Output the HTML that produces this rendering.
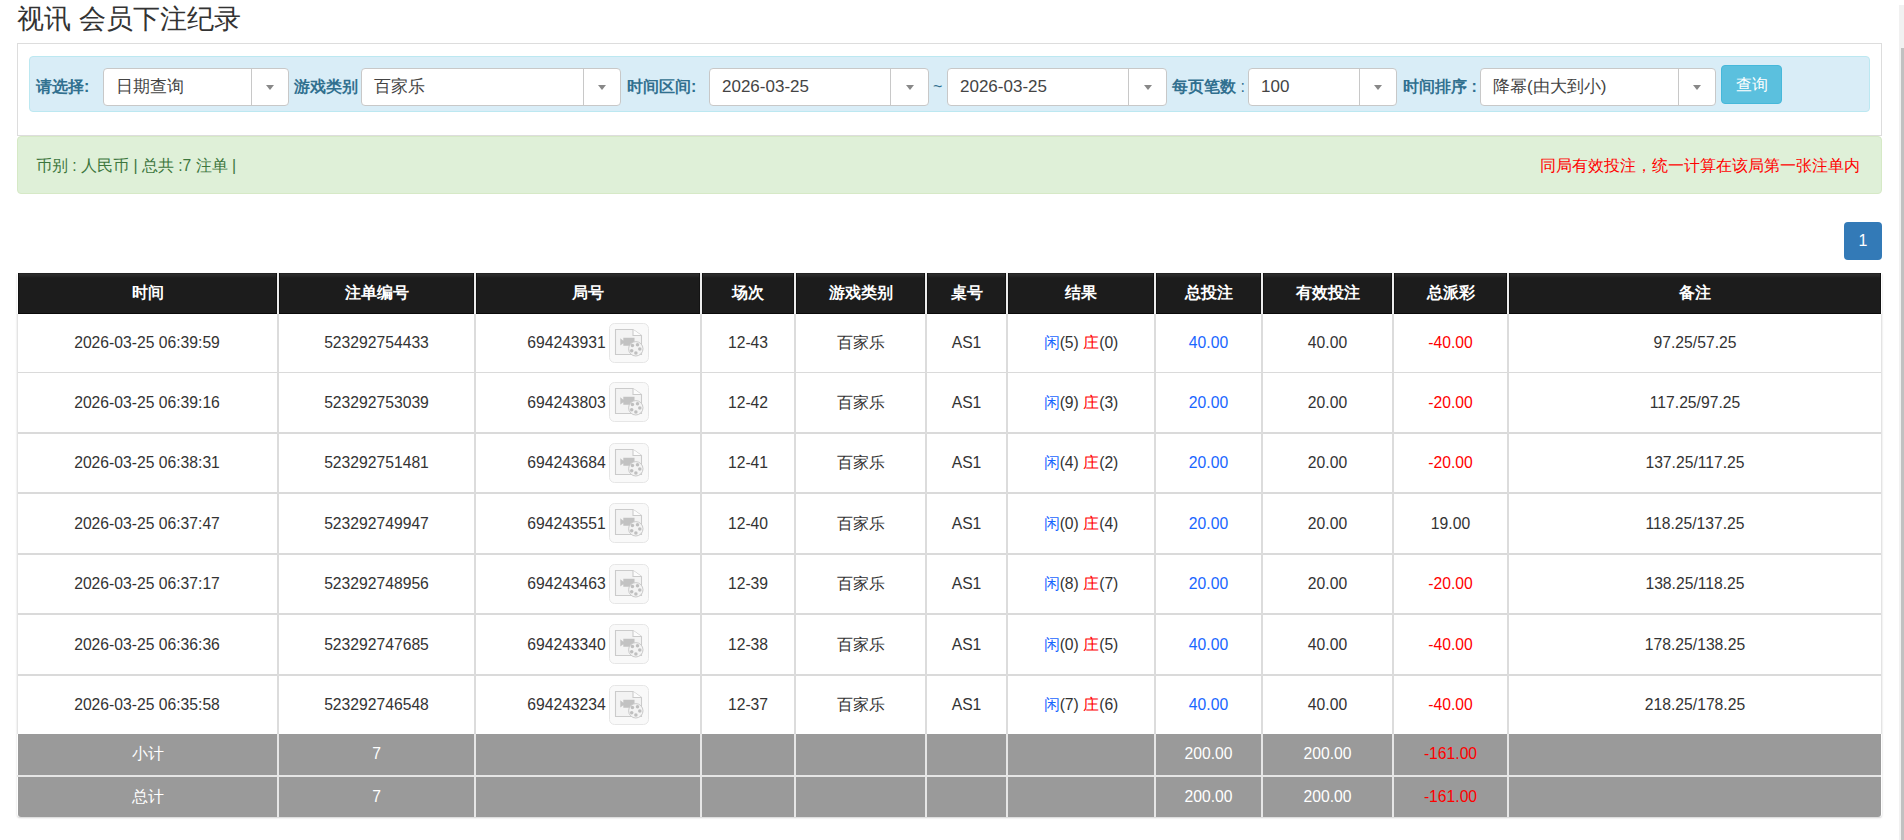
<!DOCTYPE html>
<html><head><meta charset="utf-8"><title>视讯 会员下注纪录</title>
<style>
html,body{margin:0;padding:0;background:#fff;}
body{width:1904px;height:840px;overflow:hidden;position:relative;font-family:"Liberation Sans",sans-serif;color:#333;}
.a{position:absolute;white-space:nowrap;}
.title{left:17px;top:1px;font-size:27px;line-height:36px;color:#333;}
.panel{left:17px;top:43px;width:1863px;height:91px;border:1px solid #ddd;background:#fff;}
.bar{left:29px;top:56px;width:1839px;height:54px;border:1px solid #bce8f1;background:#d9edf7;border-radius:4px;}
.lbl{font-size:16px;font-weight:bold;color:#31708f;line-height:20px;top:77px;}
.sel{top:68px;height:36px;border:1px solid #c8c8c8;border-radius:4px;background:#fff;}
.sel .dv{position:absolute;top:0;bottom:0;width:1px;background:#c8c8c8;}
.sel .tx{position:absolute;left:12px;top:0;line-height:36px;font-size:17px;color:#444;white-space:nowrap;}
.sel .car{position:absolute;top:16px;width:0;height:0;border-left:4px solid transparent;border-right:4px solid transparent;border-top:5px solid #888;}
.btn{left:1721px;top:65px;width:59px;height:37px;background:#5bc0de;border:1px solid #46b8da;border-radius:4px;color:#fff;font-size:16px;line-height:37px;text-align:center;}
.alert{left:17px;top:136px;width:1863px;height:56px;border:1px solid #d6e9c6;background:#dff0d8;border-radius:4px;}
.at{font-size:15.7px;line-height:20px;top:156px;}
.page{left:1844px;top:222px;width:38px;height:38px;background:#337ab7;border-radius:4px;color:#fff;font-size:16px;line-height:38px;text-align:center;}
.th{top:273px;height:41px;background:#1c1c1c;color:#fff;font-weight:bold;font-size:16px;line-height:39px;text-align:center;box-shadow:inset 0 -1px 0 #0a0a0a,inset 1px 0 0 #131313,inset -1px 0 0 #131313;background-image:linear-gradient(#222 0,#222 1px,#2c2c2c 1px,#262626 3px,#1c1c1c 5px);}
.td{font-size:15.7px;text-align:center;color:#333;}
.vl{background:#dcdcdc;width:2px;}
.hl{background:#dadada;height:1px;}
.gr{background:#9a9a9a;}
.gt{color:#fff;font-size:15.7px;text-align:center;}
.b{color:#1a66ff}.r{color:#f00}
</style></head><body>

<div class="a title">视讯 会员下注纪录</div>
<div class="a panel"></div>
<div class="a bar"></div>
<div class="a lbl" style="left:36px">请选择:</div>
<div class="a lbl" style="left:294px">游戏类别</div>
<div class="a lbl" style="left:627px">时间区间:</div>
<div class="a lbl" style="left:933px;font-weight:normal">~</div>
<div class="a lbl" style="left:1172px">每页笔数 <span style="font-weight:normal">:</span></div>
<div class="a lbl" style="left:1403px">时间排序 :</div>
<div class="a sel" style="left:103px;width:184px"><div class="tx">日期查询</div><div class="dv" style="left:147px"></div><div class="car" style="left:162.0px"></div></div>
<div class="a sel" style="left:361px;width:258px"><div class="tx">百家乐</div><div class="dv" style="left:221px"></div><div class="car" style="left:236.0px"></div></div>
<div class="a sel" style="left:709px;width:218px"><div class="tx">2026-03-25</div><div class="dv" style="left:180px"></div><div class="car" style="left:195.5px"></div></div>
<div class="a sel" style="left:947px;width:218px"><div class="tx">2026-03-25</div><div class="dv" style="left:180px"></div><div class="car" style="left:195.5px"></div></div>
<div class="a sel" style="left:1248px;width:147px"><div class="tx">100</div><div class="dv" style="left:110px"></div><div class="car" style="left:125.0px"></div></div>
<div class="a sel" style="left:1480px;width:234px"><div class="tx">降幂(由大到小)</div><div class="dv" style="left:197px"></div><div class="car" style="left:212.0px"></div></div>
<div class="a btn">查询</div>
<div class="a alert"></div>
<div class="a at" style="left:36px;color:#3c763d">币别 : 人民币 | 总共 :7 注单 |</div>
<div class="a at" style="right:44px;color:#f00;letter-spacing:0px">同局有效投注，统一计算在该局第一张注单内</div>
<div class="a page">1</div>
<div class="a" style="left:17px;top:273px;width:1865px;height:544px;box-shadow:0 1px 2px rgba(0,0,0,.18);border-radius:0 0 3px 3px;background:#fff"></div>
<div class="a th" style="left:18px;width:259px">时间</div>
<div class="a th" style="left:279px;width:195px">注单编号</div>
<div class="a th" style="left:476px;width:224px">局号</div>
<div class="a th" style="left:702px;width:92px">场次</div>
<div class="a th" style="left:796px;width:129px">游戏类别</div>
<div class="a th" style="left:927px;width:79px">桌号</div>
<div class="a th" style="left:1008px;width:146px">结果</div>
<div class="a th" style="left:1156px;width:105px">总投注</div>
<div class="a th" style="left:1263px;width:129px">有效投注</div>
<div class="a th" style="left:1394px;width:113px">总派彩</div>
<div class="a th" style="left:1509px;width:372px">备注</div>
<div class="a" style="left:277px;top:273px;width:2px;height:41px;background:#ececec"></div>
<div class="a" style="left:474px;top:273px;width:2px;height:41px;background:#ececec"></div>
<div class="a" style="left:700px;top:273px;width:2px;height:41px;background:#ececec"></div>
<div class="a" style="left:794px;top:273px;width:2px;height:41px;background:#ececec"></div>
<div class="a" style="left:925px;top:273px;width:2px;height:41px;background:#ececec"></div>
<div class="a" style="left:1006px;top:273px;width:2px;height:41px;background:#ececec"></div>
<div class="a" style="left:1154px;top:273px;width:2px;height:41px;background:#ececec"></div>
<div class="a" style="left:1261px;top:273px;width:2px;height:41px;background:#ececec"></div>
<div class="a" style="left:1392px;top:273px;width:2px;height:41px;background:#ececec"></div>
<div class="a" style="left:1507px;top:273px;width:2px;height:41px;background:#ececec"></div>
<div class="a td" style="left:17px;top:314px;width:260px;height:58px;line-height:58px">2026-03-25 06:39:59</div>
<div class="a td" style="left:279px;top:314px;width:195px;height:58px;line-height:58px">523292754433</div>
<div class="a td" style="left:476px;top:314px;width:224px;height:58px;line-height:58px"><span style="display:inline-block;vertical-align:top">694243931</span><span style="display:inline-block;width:40px;height:40px;margin-left:3px;vertical-align:top;margin-top:9px"><svg width="40" height="40" viewBox="0 0 40 40"><rect x="0.5" y="0.5" width="39" height="39" rx="5" fill="#f9f9f9" stroke="#e6e6e6"/>
<path d="M6.5 6.5 H24 L32.5 12.5 V31.5 H6.5 Z" fill="#f3f3f3" stroke="#cbcbcb" stroke-width="1.1"/>
<path d="M24 6.5 V12.5 H32.5" fill="#fcfcfc" stroke="#cbcbcb" stroke-width="1.1"/>
<path d="M11.3 15.3 L14.3 17.8 V14.8 H25.5 V22.8 H14.3 V20.2 L11.3 22.6 Z" fill="#c2c2c2"/>
<circle cx="26.8" cy="25.8" r="7.2" fill="#f3f3f3" stroke="#cacaca" stroke-width="1"/>
<circle cx="23.4" cy="22.6" r="1.75" fill="#bfbfbf"/><circle cx="28.5" cy="21.7" r="1.75" fill="#bfbfbf"/>
<circle cx="30.8" cy="25.9" r="1.75" fill="#bfbfbf"/><circle cx="22.7" cy="27.8" r="1.75" fill="#bfbfbf"/>
<circle cx="26.9" cy="29.9" r="1.75" fill="#bfbfbf"/></svg></span></div>
<div class="a td" style="left:702px;top:314px;width:92px;height:58px;line-height:58px">12-43</div>
<div class="a td" style="left:796px;top:314px;width:129px;height:58px;line-height:58px">百家乐</div>
<div class="a td" style="left:927px;top:314px;width:79px;height:58px;line-height:58px">AS1</div>
<div class="a td" style="left:1008px;top:314px;width:146px;height:58px;line-height:58px"><span class="b">闲</span>(5) <span class="r">庄</span>(0)</div>
<div class="a td" style="left:1156px;top:314px;width:105px;height:58px;line-height:58px"><span class="b">40.00</span></div>
<div class="a td" style="left:1263px;top:314px;width:129px;height:58px;line-height:58px">40.00</div>
<div class="a td" style="left:1394px;top:314px;width:113px;height:58px;line-height:58px"><span class="r">-40.00</span></div>
<div class="a td" style="left:1509px;top:314px;width:372px;height:58px;line-height:58px">97.25/57.25</div>
<div class="a td" style="left:17px;top:373px;width:260px;height:59px;line-height:59px">2026-03-25 06:39:16</div>
<div class="a td" style="left:279px;top:373px;width:195px;height:59px;line-height:59px">523292753039</div>
<div class="a td" style="left:476px;top:373px;width:224px;height:59px;line-height:59px"><span style="display:inline-block;vertical-align:top">694243803</span><span style="display:inline-block;width:40px;height:40px;margin-left:3px;vertical-align:top;margin-top:9px"><svg width="40" height="40" viewBox="0 0 40 40"><rect x="0.5" y="0.5" width="39" height="39" rx="5" fill="#f9f9f9" stroke="#e6e6e6"/>
<path d="M6.5 6.5 H24 L32.5 12.5 V31.5 H6.5 Z" fill="#f3f3f3" stroke="#cbcbcb" stroke-width="1.1"/>
<path d="M24 6.5 V12.5 H32.5" fill="#fcfcfc" stroke="#cbcbcb" stroke-width="1.1"/>
<path d="M11.3 15.3 L14.3 17.8 V14.8 H25.5 V22.8 H14.3 V20.2 L11.3 22.6 Z" fill="#c2c2c2"/>
<circle cx="26.8" cy="25.8" r="7.2" fill="#f3f3f3" stroke="#cacaca" stroke-width="1"/>
<circle cx="23.4" cy="22.6" r="1.75" fill="#bfbfbf"/><circle cx="28.5" cy="21.7" r="1.75" fill="#bfbfbf"/>
<circle cx="30.8" cy="25.9" r="1.75" fill="#bfbfbf"/><circle cx="22.7" cy="27.8" r="1.75" fill="#bfbfbf"/>
<circle cx="26.9" cy="29.9" r="1.75" fill="#bfbfbf"/></svg></span></div>
<div class="a td" style="left:702px;top:373px;width:92px;height:59px;line-height:59px">12-42</div>
<div class="a td" style="left:796px;top:373px;width:129px;height:59px;line-height:59px">百家乐</div>
<div class="a td" style="left:927px;top:373px;width:79px;height:59px;line-height:59px">AS1</div>
<div class="a td" style="left:1008px;top:373px;width:146px;height:59px;line-height:59px"><span class="b">闲</span>(9) <span class="r">庄</span>(3)</div>
<div class="a td" style="left:1156px;top:373px;width:105px;height:59px;line-height:59px"><span class="b">20.00</span></div>
<div class="a td" style="left:1263px;top:373px;width:129px;height:59px;line-height:59px">20.00</div>
<div class="a td" style="left:1394px;top:373px;width:113px;height:59px;line-height:59px"><span class="r">-20.00</span></div>
<div class="a td" style="left:1509px;top:373px;width:372px;height:59px;line-height:59px">117.25/97.25</div>
<div class="a td" style="left:17px;top:434px;width:260px;height:58px;line-height:58px">2026-03-25 06:38:31</div>
<div class="a td" style="left:279px;top:434px;width:195px;height:58px;line-height:58px">523292751481</div>
<div class="a td" style="left:476px;top:434px;width:224px;height:58px;line-height:58px"><span style="display:inline-block;vertical-align:top">694243684</span><span style="display:inline-block;width:40px;height:40px;margin-left:3px;vertical-align:top;margin-top:9px"><svg width="40" height="40" viewBox="0 0 40 40"><rect x="0.5" y="0.5" width="39" height="39" rx="5" fill="#f9f9f9" stroke="#e6e6e6"/>
<path d="M6.5 6.5 H24 L32.5 12.5 V31.5 H6.5 Z" fill="#f3f3f3" stroke="#cbcbcb" stroke-width="1.1"/>
<path d="M24 6.5 V12.5 H32.5" fill="#fcfcfc" stroke="#cbcbcb" stroke-width="1.1"/>
<path d="M11.3 15.3 L14.3 17.8 V14.8 H25.5 V22.8 H14.3 V20.2 L11.3 22.6 Z" fill="#c2c2c2"/>
<circle cx="26.8" cy="25.8" r="7.2" fill="#f3f3f3" stroke="#cacaca" stroke-width="1"/>
<circle cx="23.4" cy="22.6" r="1.75" fill="#bfbfbf"/><circle cx="28.5" cy="21.7" r="1.75" fill="#bfbfbf"/>
<circle cx="30.8" cy="25.9" r="1.75" fill="#bfbfbf"/><circle cx="22.7" cy="27.8" r="1.75" fill="#bfbfbf"/>
<circle cx="26.9" cy="29.9" r="1.75" fill="#bfbfbf"/></svg></span></div>
<div class="a td" style="left:702px;top:434px;width:92px;height:58px;line-height:58px">12-41</div>
<div class="a td" style="left:796px;top:434px;width:129px;height:58px;line-height:58px">百家乐</div>
<div class="a td" style="left:927px;top:434px;width:79px;height:58px;line-height:58px">AS1</div>
<div class="a td" style="left:1008px;top:434px;width:146px;height:58px;line-height:58px"><span class="b">闲</span>(4) <span class="r">庄</span>(2)</div>
<div class="a td" style="left:1156px;top:434px;width:105px;height:58px;line-height:58px"><span class="b">20.00</span></div>
<div class="a td" style="left:1263px;top:434px;width:129px;height:58px;line-height:58px">20.00</div>
<div class="a td" style="left:1394px;top:434px;width:113px;height:58px;line-height:58px"><span class="r">-20.00</span></div>
<div class="a td" style="left:1509px;top:434px;width:372px;height:58px;line-height:58px">137.25/117.25</div>
<div class="a td" style="left:17px;top:494px;width:260px;height:59px;line-height:59px">2026-03-25 06:37:47</div>
<div class="a td" style="left:279px;top:494px;width:195px;height:59px;line-height:59px">523292749947</div>
<div class="a td" style="left:476px;top:494px;width:224px;height:59px;line-height:59px"><span style="display:inline-block;vertical-align:top">694243551</span><span style="display:inline-block;width:40px;height:40px;margin-left:3px;vertical-align:top;margin-top:9px"><svg width="40" height="40" viewBox="0 0 40 40"><rect x="0.5" y="0.5" width="39" height="39" rx="5" fill="#f9f9f9" stroke="#e6e6e6"/>
<path d="M6.5 6.5 H24 L32.5 12.5 V31.5 H6.5 Z" fill="#f3f3f3" stroke="#cbcbcb" stroke-width="1.1"/>
<path d="M24 6.5 V12.5 H32.5" fill="#fcfcfc" stroke="#cbcbcb" stroke-width="1.1"/>
<path d="M11.3 15.3 L14.3 17.8 V14.8 H25.5 V22.8 H14.3 V20.2 L11.3 22.6 Z" fill="#c2c2c2"/>
<circle cx="26.8" cy="25.8" r="7.2" fill="#f3f3f3" stroke="#cacaca" stroke-width="1"/>
<circle cx="23.4" cy="22.6" r="1.75" fill="#bfbfbf"/><circle cx="28.5" cy="21.7" r="1.75" fill="#bfbfbf"/>
<circle cx="30.8" cy="25.9" r="1.75" fill="#bfbfbf"/><circle cx="22.7" cy="27.8" r="1.75" fill="#bfbfbf"/>
<circle cx="26.9" cy="29.9" r="1.75" fill="#bfbfbf"/></svg></span></div>
<div class="a td" style="left:702px;top:494px;width:92px;height:59px;line-height:59px">12-40</div>
<div class="a td" style="left:796px;top:494px;width:129px;height:59px;line-height:59px">百家乐</div>
<div class="a td" style="left:927px;top:494px;width:79px;height:59px;line-height:59px">AS1</div>
<div class="a td" style="left:1008px;top:494px;width:146px;height:59px;line-height:59px"><span class="b">闲</span>(0) <span class="r">庄</span>(4)</div>
<div class="a td" style="left:1156px;top:494px;width:105px;height:59px;line-height:59px"><span class="b">20.00</span></div>
<div class="a td" style="left:1263px;top:494px;width:129px;height:59px;line-height:59px">20.00</div>
<div class="a td" style="left:1394px;top:494px;width:113px;height:59px;line-height:59px">19.00</div>
<div class="a td" style="left:1509px;top:494px;width:372px;height:59px;line-height:59px">118.25/137.25</div>
<div class="a td" style="left:17px;top:555px;width:260px;height:58px;line-height:58px">2026-03-25 06:37:17</div>
<div class="a td" style="left:279px;top:555px;width:195px;height:58px;line-height:58px">523292748956</div>
<div class="a td" style="left:476px;top:555px;width:224px;height:58px;line-height:58px"><span style="display:inline-block;vertical-align:top">694243463</span><span style="display:inline-block;width:40px;height:40px;margin-left:3px;vertical-align:top;margin-top:9px"><svg width="40" height="40" viewBox="0 0 40 40"><rect x="0.5" y="0.5" width="39" height="39" rx="5" fill="#f9f9f9" stroke="#e6e6e6"/>
<path d="M6.5 6.5 H24 L32.5 12.5 V31.5 H6.5 Z" fill="#f3f3f3" stroke="#cbcbcb" stroke-width="1.1"/>
<path d="M24 6.5 V12.5 H32.5" fill="#fcfcfc" stroke="#cbcbcb" stroke-width="1.1"/>
<path d="M11.3 15.3 L14.3 17.8 V14.8 H25.5 V22.8 H14.3 V20.2 L11.3 22.6 Z" fill="#c2c2c2"/>
<circle cx="26.8" cy="25.8" r="7.2" fill="#f3f3f3" stroke="#cacaca" stroke-width="1"/>
<circle cx="23.4" cy="22.6" r="1.75" fill="#bfbfbf"/><circle cx="28.5" cy="21.7" r="1.75" fill="#bfbfbf"/>
<circle cx="30.8" cy="25.9" r="1.75" fill="#bfbfbf"/><circle cx="22.7" cy="27.8" r="1.75" fill="#bfbfbf"/>
<circle cx="26.9" cy="29.9" r="1.75" fill="#bfbfbf"/></svg></span></div>
<div class="a td" style="left:702px;top:555px;width:92px;height:58px;line-height:58px">12-39</div>
<div class="a td" style="left:796px;top:555px;width:129px;height:58px;line-height:58px">百家乐</div>
<div class="a td" style="left:927px;top:555px;width:79px;height:58px;line-height:58px">AS1</div>
<div class="a td" style="left:1008px;top:555px;width:146px;height:58px;line-height:58px"><span class="b">闲</span>(8) <span class="r">庄</span>(7)</div>
<div class="a td" style="left:1156px;top:555px;width:105px;height:58px;line-height:58px"><span class="b">20.00</span></div>
<div class="a td" style="left:1263px;top:555px;width:129px;height:58px;line-height:58px">20.00</div>
<div class="a td" style="left:1394px;top:555px;width:113px;height:58px;line-height:58px"><span class="r">-20.00</span></div>
<div class="a td" style="left:1509px;top:555px;width:372px;height:58px;line-height:58px">138.25/118.25</div>
<div class="a td" style="left:17px;top:615px;width:260px;height:59px;line-height:59px">2026-03-25 06:36:36</div>
<div class="a td" style="left:279px;top:615px;width:195px;height:59px;line-height:59px">523292747685</div>
<div class="a td" style="left:476px;top:615px;width:224px;height:59px;line-height:59px"><span style="display:inline-block;vertical-align:top">694243340</span><span style="display:inline-block;width:40px;height:40px;margin-left:3px;vertical-align:top;margin-top:9px"><svg width="40" height="40" viewBox="0 0 40 40"><rect x="0.5" y="0.5" width="39" height="39" rx="5" fill="#f9f9f9" stroke="#e6e6e6"/>
<path d="M6.5 6.5 H24 L32.5 12.5 V31.5 H6.5 Z" fill="#f3f3f3" stroke="#cbcbcb" stroke-width="1.1"/>
<path d="M24 6.5 V12.5 H32.5" fill="#fcfcfc" stroke="#cbcbcb" stroke-width="1.1"/>
<path d="M11.3 15.3 L14.3 17.8 V14.8 H25.5 V22.8 H14.3 V20.2 L11.3 22.6 Z" fill="#c2c2c2"/>
<circle cx="26.8" cy="25.8" r="7.2" fill="#f3f3f3" stroke="#cacaca" stroke-width="1"/>
<circle cx="23.4" cy="22.6" r="1.75" fill="#bfbfbf"/><circle cx="28.5" cy="21.7" r="1.75" fill="#bfbfbf"/>
<circle cx="30.8" cy="25.9" r="1.75" fill="#bfbfbf"/><circle cx="22.7" cy="27.8" r="1.75" fill="#bfbfbf"/>
<circle cx="26.9" cy="29.9" r="1.75" fill="#bfbfbf"/></svg></span></div>
<div class="a td" style="left:702px;top:615px;width:92px;height:59px;line-height:59px">12-38</div>
<div class="a td" style="left:796px;top:615px;width:129px;height:59px;line-height:59px">百家乐</div>
<div class="a td" style="left:927px;top:615px;width:79px;height:59px;line-height:59px">AS1</div>
<div class="a td" style="left:1008px;top:615px;width:146px;height:59px;line-height:59px"><span class="b">闲</span>(0) <span class="r">庄</span>(5)</div>
<div class="a td" style="left:1156px;top:615px;width:105px;height:59px;line-height:59px"><span class="b">40.00</span></div>
<div class="a td" style="left:1263px;top:615px;width:129px;height:59px;line-height:59px">40.00</div>
<div class="a td" style="left:1394px;top:615px;width:113px;height:59px;line-height:59px"><span class="r">-40.00</span></div>
<div class="a td" style="left:1509px;top:615px;width:372px;height:59px;line-height:59px">178.25/138.25</div>
<div class="a td" style="left:17px;top:676px;width:260px;height:58px;line-height:58px">2026-03-25 06:35:58</div>
<div class="a td" style="left:279px;top:676px;width:195px;height:58px;line-height:58px">523292746548</div>
<div class="a td" style="left:476px;top:676px;width:224px;height:58px;line-height:58px"><span style="display:inline-block;vertical-align:top">694243234</span><span style="display:inline-block;width:40px;height:40px;margin-left:3px;vertical-align:top;margin-top:9px"><svg width="40" height="40" viewBox="0 0 40 40"><rect x="0.5" y="0.5" width="39" height="39" rx="5" fill="#f9f9f9" stroke="#e6e6e6"/>
<path d="M6.5 6.5 H24 L32.5 12.5 V31.5 H6.5 Z" fill="#f3f3f3" stroke="#cbcbcb" stroke-width="1.1"/>
<path d="M24 6.5 V12.5 H32.5" fill="#fcfcfc" stroke="#cbcbcb" stroke-width="1.1"/>
<path d="M11.3 15.3 L14.3 17.8 V14.8 H25.5 V22.8 H14.3 V20.2 L11.3 22.6 Z" fill="#c2c2c2"/>
<circle cx="26.8" cy="25.8" r="7.2" fill="#f3f3f3" stroke="#cacaca" stroke-width="1"/>
<circle cx="23.4" cy="22.6" r="1.75" fill="#bfbfbf"/><circle cx="28.5" cy="21.7" r="1.75" fill="#bfbfbf"/>
<circle cx="30.8" cy="25.9" r="1.75" fill="#bfbfbf"/><circle cx="22.7" cy="27.8" r="1.75" fill="#bfbfbf"/>
<circle cx="26.9" cy="29.9" r="1.75" fill="#bfbfbf"/></svg></span></div>
<div class="a td" style="left:702px;top:676px;width:92px;height:58px;line-height:58px">12-37</div>
<div class="a td" style="left:796px;top:676px;width:129px;height:58px;line-height:58px">百家乐</div>
<div class="a td" style="left:927px;top:676px;width:79px;height:58px;line-height:58px">AS1</div>
<div class="a td" style="left:1008px;top:676px;width:146px;height:58px;line-height:58px"><span class="b">闲</span>(7) <span class="r">庄</span>(6)</div>
<div class="a td" style="left:1156px;top:676px;width:105px;height:58px;line-height:58px"><span class="b">40.00</span></div>
<div class="a td" style="left:1263px;top:676px;width:129px;height:58px;line-height:58px">40.00</div>
<div class="a td" style="left:1394px;top:676px;width:113px;height:58px;line-height:58px"><span class="r">-40.00</span></div>
<div class="a td" style="left:1509px;top:676px;width:372px;height:58px;line-height:58px">218.25/178.25</div>
<div class="a hl" style="left:17px;top:372px;width:1865px;height:1px"></div>
<div class="a hl" style="left:17px;top:432px;width:1865px;height:2px"></div>
<div class="a hl" style="left:17px;top:492px;width:1865px;height:2px"></div>
<div class="a hl" style="left:17px;top:553px;width:1865px;height:2px"></div>
<div class="a hl" style="left:17px;top:613px;width:1865px;height:2px"></div>
<div class="a hl" style="left:17px;top:674px;width:1865px;height:2px"></div>
<div class="a vl" style="left:277px;top:314px;height:420px"></div>
<div class="a vl" style="left:474px;top:314px;height:420px"></div>
<div class="a vl" style="left:700px;top:314px;height:420px"></div>
<div class="a vl" style="left:794px;top:314px;height:420px"></div>
<div class="a vl" style="left:925px;top:314px;height:420px"></div>
<div class="a vl" style="left:1006px;top:314px;height:420px"></div>
<div class="a vl" style="left:1154px;top:314px;height:420px"></div>
<div class="a vl" style="left:1261px;top:314px;height:420px"></div>
<div class="a vl" style="left:1392px;top:314px;height:420px"></div>
<div class="a vl" style="left:1507px;top:314px;height:420px"></div>
<div class="a" style="left:17px;top:314px;width:1px;height:420px;background:#e4e4e4"></div>
<div class="a" style="left:1881px;top:314px;width:1px;height:420px;background:#e4e4e4"></div>
<div class="a gr gt" style="left:18px;top:734px;width:259px;height:41px;line-height:39px;">小计</div>
<div class="a gr gt" style="left:279px;top:734px;width:195px;height:41px;line-height:39px;">7</div>
<div class="a gr gt" style="left:476px;top:734px;width:224px;height:41px;line-height:39px;"></div>
<div class="a gr gt" style="left:702px;top:734px;width:92px;height:41px;line-height:39px;"></div>
<div class="a gr gt" style="left:796px;top:734px;width:129px;height:41px;line-height:39px;"></div>
<div class="a gr gt" style="left:927px;top:734px;width:79px;height:41px;line-height:39px;"></div>
<div class="a gr gt" style="left:1008px;top:734px;width:146px;height:41px;line-height:39px;"></div>
<div class="a gr gt" style="left:1156px;top:734px;width:105px;height:41px;line-height:39px;">200.00</div>
<div class="a gr gt" style="left:1263px;top:734px;width:129px;height:41px;line-height:39px;">200.00</div>
<div class="a gr gt" style="left:1394px;top:734px;width:113px;height:41px;line-height:39px;"><span class="r">-161.00</span></div>
<div class="a gr gt" style="left:1509px;top:734px;width:372px;height:41px;line-height:39px;"></div>
<div class="a gr gt" style="left:18px;top:777px;width:259px;height:40px;line-height:40px;border-bottom-left-radius:3px;">总计</div>
<div class="a gr gt" style="left:279px;top:777px;width:195px;height:40px;line-height:40px;">7</div>
<div class="a gr gt" style="left:476px;top:777px;width:224px;height:40px;line-height:40px;"></div>
<div class="a gr gt" style="left:702px;top:777px;width:92px;height:40px;line-height:40px;"></div>
<div class="a gr gt" style="left:796px;top:777px;width:129px;height:40px;line-height:40px;"></div>
<div class="a gr gt" style="left:927px;top:777px;width:79px;height:40px;line-height:40px;"></div>
<div class="a gr gt" style="left:1008px;top:777px;width:146px;height:40px;line-height:40px;"></div>
<div class="a gr gt" style="left:1156px;top:777px;width:105px;height:40px;line-height:40px;">200.00</div>
<div class="a gr gt" style="left:1263px;top:777px;width:129px;height:40px;line-height:40px;">200.00</div>
<div class="a gr gt" style="left:1394px;top:777px;width:113px;height:40px;line-height:40px;"><span class="r">-161.00</span></div>
<div class="a gr gt" style="left:1509px;top:777px;width:372px;height:40px;line-height:40px;border-bottom-right-radius:3px;"></div>
<div class="a" style="left:17px;top:775px;width:1864px;height:2px;background:#e6e6e6"></div>
<div class="a" style="left:277px;top:734px;width:2px;height:83px;background:#e6e6e6"></div>
<div class="a" style="left:474px;top:734px;width:2px;height:83px;background:#e6e6e6"></div>
<div class="a" style="left:700px;top:734px;width:2px;height:83px;background:#e6e6e6"></div>
<div class="a" style="left:794px;top:734px;width:2px;height:83px;background:#e6e6e6"></div>
<div class="a" style="left:925px;top:734px;width:2px;height:83px;background:#e6e6e6"></div>
<div class="a" style="left:1006px;top:734px;width:2px;height:83px;background:#e6e6e6"></div>
<div class="a" style="left:1154px;top:734px;width:2px;height:83px;background:#e6e6e6"></div>
<div class="a" style="left:1261px;top:734px;width:2px;height:83px;background:#e6e6e6"></div>
<div class="a" style="left:1392px;top:734px;width:2px;height:83px;background:#e6e6e6"></div>
<div class="a" style="left:1507px;top:734px;width:2px;height:83px;background:#e6e6e6"></div>
<div class="a" style="left:1899px;top:5px;width:5px;height:835px;background:#f1f1f1"></div>
<div class="a" style="left:1901px;top:48px;width:3px;height:792px;background:#c1c1c1"></div>
</body></html>
